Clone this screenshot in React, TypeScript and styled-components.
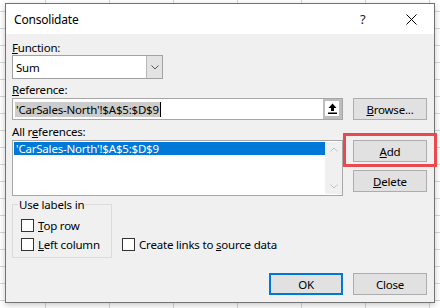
import React from 'react';
import styled, { createGlobalStyle } from 'styled-components';

const GlobalStyle = createGlobalStyle`
  html, body {
    margin: 0;
    padding: 0;
    width: 440px;
    height: 308px;
    overflow: hidden;
  }
  body {
    background-color: #ffffff;
    background-image:
      linear-gradient(to right, #d6d6d6 1px, transparent 1px),
      linear-gradient(to bottom, #d6d6d6 1px, transparent 1px);
    background-size: 64px 17px;
    background-position: 45px 11px;
    font-family: 'Noto Sans', 'Open Sans', sans-serif;
    font-size: 11.5px;
    letter-spacing: -0.2px;
    color: #000;
  }
  * {
    box-sizing: border-box;
  }
`;

const Dialog = styled.div`
  margin: 3px 0 0 5px;
  width: 430px;
  height: 300px;
  border: 1px solid #737373;
  background: #f0f0f0;
  box-shadow: 0 2px 6px rgba(0, 0, 0, 0.22);
  display: flex;
  flex-direction: column;
`;

const TitleBar = styled.div`
  height: 30px;
  background: #ffffff;
  display: flex;
  align-items: center;
  padding-left: 8px;
`;

const Title = styled.span`
  flex: 1;
  font-size: 12px;
`;

const HelpMark = styled.span`
  width: 14px;
  margin-right: 32px;
  font-size: 13px;
  color: #222;
`;

const CloseX = styled.svg`
  width: 11px;
  height: 11px;
  margin-right: 17px;
`;

const Body = styled.div`
  flex: 1;
  display: flex;
  flex-direction: column;
  padding: 6px 7px 7px 6px;
`;

const Label = styled.div<{ $top?: number }>`
  height: 15px;
  line-height: 15px;
  margin-top: ${(p) => p.$top ?? 0}px;
  margin-bottom: ${(p) => (p.$top ? 1 : 0)}px;
`;

const Select = styled.div`
  width: 151px;
  height: 24px;
  border: 1px solid #a2a2a2;
  background: #fff;
  display: flex;
  align-items: center;
`;

const SelectValue = styled.span`
  flex: 1;
  padding-left: 3px;
`;

const SelectButton = styled.div`
  width: 16px;
  height: 100%;
  background: #e3e3e3;
  border-left: 1px solid #b8b8b8;
  display: flex;
  align-items: center;
  justify-content: center;
`;

const Row = styled.div`
  display: flex;
  gap: 10px;
`;

const RefInput = styled.div`
  width: 331px;
  height: 22px;
  border: 1px solid #a7a7a7;
  background: #fff;
  display: flex;
  align-items: center;
  padding-left: 2px;
`;

const Selected = styled.span`
  background: #cccccc;
  line-height: 15px;
  padding: 0 1px;
`;

const Caret = styled.span`
  width: 1px;
  height: 15px;
  background: #000;
`;

const Spacer = styled.span`
  flex: 1;
`;

const CollapseButton = styled.div`
  width: 19px;
  height: 100%;
  background: #bdbdbd;
  padding: 2px 3px 3px 2px;
  display: flex;
`;

const CollapseFace = styled.div`
  flex: 1;
  background: #fff;
  display: flex;
  align-items: center;
  justify-content: center;
`;

const Button = styled.button<{ $default?: boolean }>`
  width: 74px;
  height: 22px;
  padding: 0;
  font-family: inherit;
  font-size: 11.5px;
  letter-spacing: -0.2px;
  color: #000;
  background: #e1e1e1;
  border: ${(p) => (p.$default ? '2px solid #0078d7' : '1px solid #adadad')};
`;

const ListBox = styled.div`
  width: 331px;
  height: 56px;
  border: 1px solid #a7a7a7;
  background: #fff;
  display: flex;
  padding: 1px 0 1px 1px;
`;

const ListItems = styled.div`
  flex: 1;
`;

const ListItem = styled.div<{ $selected?: boolean }>`
  height: 13px;
  line-height: 13px;
  padding-left: 2px;
  background: ${(p) => (p.$selected ? '#0078d7' : 'transparent')};
  color: ${(p) => (p.$selected ? '#fff' : '#000')};
`;

const ScrollBar = styled.div`
  width: 17px;
  background: #f0f0f0;
  display: flex;
  flex-direction: column;
  justify-content: space-between;
  align-items: center;
  padding: 5px 0 5px;
`;

const ButtonColumn = styled.div`
  display: flex;
  flex-direction: column;
  gap: 8px;
`;

const Highlighted = styled.div`
  position: relative;
`;

const Marker = styled.div`
  position: absolute;
  top: -7px;
  left: -10px;
  width: 94px;
  height: 34px;
  border: 3px solid #ea4a4f;
  pointer-events: none;
`;

const Options = styled.div`
  display: flex;
  align-items: flex-end;
  gap: 10px;
  margin-top: 1px;
`;

const GroupBox = styled.fieldset`
  width: 100px;
  margin: 0;
  padding: 4px 8px 3px 8px;
  border: 1px solid #dcdcdc;
`;

const GroupLegend = styled.legend`
  padding: 0 1px;
  margin-left: -3px;
  line-height: 15px;
`;

const CheckRow = styled.label<{ $bottom?: number }>`
  height: 19px;
  display: flex;
  align-items: center;
  gap: 4px;
  white-space: nowrap;
  margin-bottom: ${(p) => p.$bottom ?? 0}px;
`;

const CheckBox = styled.span`
  width: 13px;
  height: 13px;
  border: 1px solid #333;
  background: #fff;
`;

const Footer = styled.div`
  margin-top: auto;
  display: flex;
  justify-content: flex-end;
  gap: 10px;
`;

const Chevron = ({ up }: { up?: boolean }) => (
  <svg width="8" height="5" viewBox="0 0 8 5">
    <polyline
      points={up ? '0.5,4.5 4,1 7.5,4.5' : '0.5,0.5 4,4 7.5,0.5'}
      fill="none"
      stroke="#c2c2c2"
      strokeWidth="1"
    />
  </svg>
);

export default function App() {
  return (
    <>
      <GlobalStyle />
      <Dialog>
        <TitleBar>
          <Title>Consolidate</Title>
          <HelpMark>?</HelpMark>
          <CloseX viewBox="0 0 11 11">
            <path d="M0.5 0.5 L10.5 10.5 M10.5 0.5 L0.5 10.5" stroke="#000" strokeWidth="1" />
          </CloseX>
        </TitleBar>
        <Body>
          <Label>
            <u>F</u>unction:
          </Label>
          <Select>
            <SelectValue>Sum</SelectValue>
            <SelectButton>
              <svg width="8" height="5" viewBox="0 0 8 5">
                <polyline points="0.5,0.5 4,4 7.5,0.5" fill="none" stroke="#555" strokeWidth="1" />
              </svg>
            </SelectButton>
          </Select>
          <Label $top={3}>
            <u>R</u>eference:
          </Label>
          <Row>
            <RefInput>
              <Selected>'CarSales-North'!$A$5:$D$9</Selected>
              <Caret />
              <Spacer />
              <CollapseButton>
                <CollapseFace>
                  <svg width="9" height="11" viewBox="0 0 9 11">
                    <path d="M4.5 0.5 L8.5 5 L6 5 L6 8 L3 8 L3 5 L0.5 5 Z" fill="#000" />
                    <rect x="0" y="9.5" width="9" height="1.5" fill="#000" />
                  </svg>
                </CollapseFace>
              </CollapseButton>
            </RefInput>
            <Button>
              <u>B</u>rowse...
            </Button>
          </Row>
          <Label $top={4}>
            All r<u>e</u>ferences:
          </Label>
          <Row>
            <ListBox>
              <ListItems>
                <ListItem $selected>'CarSales-North'!$A$5:$D$9</ListItem>
              </ListItems>
              <ScrollBar>
                <Chevron up />
                <Chevron />
              </ScrollBar>
            </ListBox>
            <ButtonColumn>
              <Highlighted>
                <Button>
                  <u>A</u>dd
                </Button>
                <Marker />
              </Highlighted>
              <Button>
                <u>D</u>elete
              </Button>
            </ButtonColumn>
          </Row>
          <Options>
            <GroupBox>
              <GroupLegend>Use labels in</GroupLegend>
              <CheckRow>
                <CheckBox />
                <span>
                  <u>T</u>op row
                </span>
              </CheckRow>
              <CheckRow>
                <CheckBox />
                <span>
                  <u>L</u>eft column
                </span>
              </CheckRow>
            </GroupBox>
            <CheckRow $bottom={4}>
              <CheckBox />
              <span>
                Create links to <u>s</u>ource data
              </span>
            </CheckRow>
          </Options>
          <Footer>
            <Button $default>OK</Button>
            <Button>Close</Button>
          </Footer>
        </Body>
      </Dialog>
    </>
  );
}
